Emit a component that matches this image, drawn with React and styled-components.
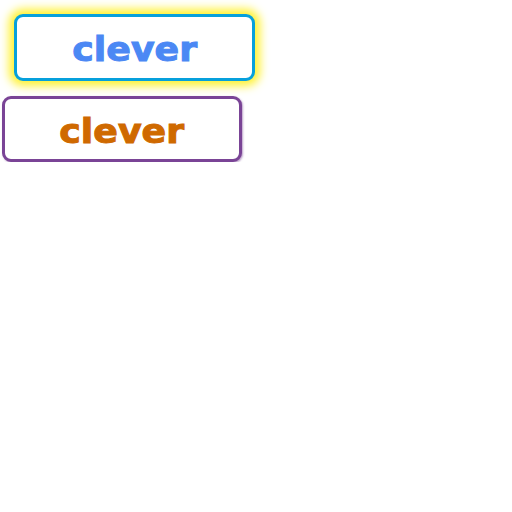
import React from "react";
import styled, { createGlobalStyle } from "styled-components";

const GlobalStyle = createGlobalStyle`
  html, body {
    margin: 0;
    padding: 0;
    background: #ffffff;
  }
`;

const Page = styled.div`
  display: flex;
  flex-direction: column;
  align-items: flex-start;
  gap: 15px;
  padding-top: 14px;
`;

const WordButton = styled.div`
  box-sizing: border-box;
  display: flex;
  align-items: center;
  justify-content: center;
  width: ${(p) => p.$w}px;
  height: ${(p) => p.$h}px;
  margin-left: ${(p) => p.$left}px;
  background: #ffffff;
  border: 3.5px solid ${(p) => p.$border};
  border-radius: 9px;
  box-shadow: ${(p) => p.$shadow};
  cursor: pointer;
`;

const Word = styled.span`
  display: inline-block;
  font-family: "DejaVu Sans", sans-serif;
  font-weight: 700;
  font-size: 33px;
  line-height: 1;
  color: ${(p) => p.$color};
  -webkit-text-stroke: 1px ${(p) => p.$color};
  transform: scaleX(1.1);
  margin-top: 4px;
`;

export default function App() {
  return (
    <>
      <GlobalStyle />
      <Page>
        <WordButton
          $w={241}
          $h={67}
          $left={14}
          $border="#06a0dc"
          $shadow="0 0 10px 5px #fff230"
        >
          <Word $color="#4b88f4">clever</Word>
        </WordButton>
        <WordButton
          $w={240}
          $h={66}
          $left={2}
          $border="#7a4496"
          $shadow="1px 1px 2px rgba(122, 68, 150, 0.5)"
        >
          <Word $color="#cf6900">clever</Word>
        </WordButton>
      </Page>
    </>
  );
}
